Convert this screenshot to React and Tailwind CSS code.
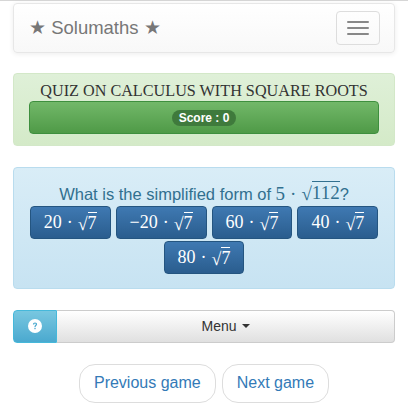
import React from 'react';

const ANSWERS = ['20', '\u221220', '60', '40', '80'];

const SERIF = { fontFamily: '"Liberation Serif", "Times New Roman", serif' };

// Square root with an overline on the radicand, drawn with plain text + border
const Sqrt = ({ children, line = 'border-white' }) => (
  <span className="inline-flex items-end">
    <span className="leading-none">√</span>
    <span className={`leading-[1.05] border-t ${line} pt-px`}>{children}</span>
  </span>
);

const App = () => {
  return (
    <div
      className="min-h-[410px] w-[408px] bg-white border-t border-[#d6d6d6] px-[13px]"
      style={{ fontFamily: '"Liberation Sans", Arial, sans-serif' }}
    >
      {/* ===== NAVBAR ===== */}
      <div className="mt-[2px] h-[50px] flex items-center justify-between pl-[15px] pr-[14px] rounded-[4px] border border-[#e7e7e7] bg-gradient-to-b from-white to-[#f8f8f8] shadow-[0_1px_5px_rgba(0,0,0,0.075)]">
        <span className="text-[18.5px] text-[#777]">★ Solumaths ★</span>
        <button
          type="button"
          className="w-[44px] h-[34px] flex flex-col items-center justify-center gap-[4px] rounded-[4px] border border-[#ddd]"
        >
          <span className="block w-[22px] h-[2px] rounded-[1px] bg-[#888]" />
          <span className="block w-[22px] h-[2px] rounded-[1px] bg-[#888]" />
          <span className="block w-[22px] h-[2px] rounded-[1px] bg-[#888]" />
        </button>
      </div>

      {/* ===== QUIZ TITLE ===== */}
      <div className="mt-[20px] rounded-[4px] border border-[#d3e8c8] bg-gradient-to-b from-[#dff0d8] to-[#d4eac8] px-[15px] pt-[7px] pb-[11px]">
        <div
          className="text-center text-[16.2px] leading-[20px] text-[#333] uppercase"
          style={SERIF}
        >
          Quiz on calculus with square roots
        </div>
        <div className="h-[33px] flex items-center justify-center rounded-[4px] border border-[#3e8f3e] bg-gradient-to-b from-[#72b869] to-[#4f9a47]">
          <span className="px-[7px] h-[16px] flex items-center rounded-full bg-[#3f7a3c] text-white text-[12px] font-bold">
            Score : 0
          </span>
        </div>
      </div>

      {/* ===== QUESTION ===== */}
      <div className="mt-[21px] rounded-[4px] border border-[#b9dcee] bg-gradient-to-b from-[#d9edf7] to-[#c7e3f2] px-[15px] pt-[13px] pb-[14px]">
        <div className="text-center text-[16.5px] leading-[24px] text-[#31708f]">
          What is the simplified form of{' '}
          <span className="text-[19px]" style={SERIF}>
            5<span className="mx-[5px]">·</span>
            <Sqrt line="border-[#31708f]">112</Sqrt>
          </span>
          ?
        </div>
        <div className="flex flex-wrap justify-center gap-x-[5px] gap-y-[2px]">
          {ANSWERS.map((coef, i) => (
            <button
              key={i}
              type="button"
              className="h-[33px] px-[13px] flex items-center rounded-[4px] border border-[#245580] bg-gradient-to-b from-[#3f79b2] to-[#2a5d8e] text-white text-[18px]"
              style={SERIF}
            >
              {coef}
              <span className="mx-[5px]">·</span>
              <Sqrt>7</Sqrt>
            </button>
          ))}
        </div>
      </div>

      {/* ===== MENU ===== */}
      <div className="mt-[21px] h-[33px] flex">
        <button
          type="button"
          className="w-[44px] flex items-center justify-center rounded-l-[4px] border border-[#46b8da] bg-gradient-to-b from-[#78c7e0] to-[#4aa9cf]"
        >
          <svg width="14" height="14" viewBox="0 0 14 14">
            <circle cx="7" cy="7" r="7" fill="#fff" />
            <path
              d="M4.9 5.4 C4.9 4.1 5.8 3.4 7 3.4 C8.3 3.4 9.1 4.2 9.1 5.2 C9.1 6.6 7.6 6.7 7.6 8 L6.4 8 C6.4 6.2 7.8 6.2 7.8 5.3 C7.8 4.8 7.5 4.5 7 4.5 C6.5 4.5 6.2 4.9 6.2 5.4 Z"
              fill="#4aa9cf"
            />
            <rect x="6.35" y="8.8" width="1.3" height="1.4" fill="#4aa9cf" />
          </svg>
        </button>
        <button
          type="button"
          className="flex-1 flex items-center justify-center gap-[5px] rounded-r-[4px] border border-l-0 border-[#ccc] bg-gradient-to-b from-white to-[#e0e0e0] text-[14px] text-[#333]"
        >
          Menu
          <span className="w-0 h-0 border-x-[4px] border-x-transparent border-t-[4px] border-t-[#333]" />
        </button>
      </div>

      {/* ===== GAME NAV ===== */}
      <div className="mt-[21px] flex justify-center gap-[6px]">
        <button
          type="button"
          className="h-[39px] px-[14px] rounded-[16px] border border-[#ddd] bg-white text-[16px] text-[#337ab7]"
        >
          Previous game
        </button>
        <button
          type="button"
          className="h-[39px] px-[14px] rounded-[16px] border border-[#ddd] bg-white text-[16px] text-[#337ab7]"
        >
          Next game
        </button>
      </div>
    </div>
  );
};

export default App;
